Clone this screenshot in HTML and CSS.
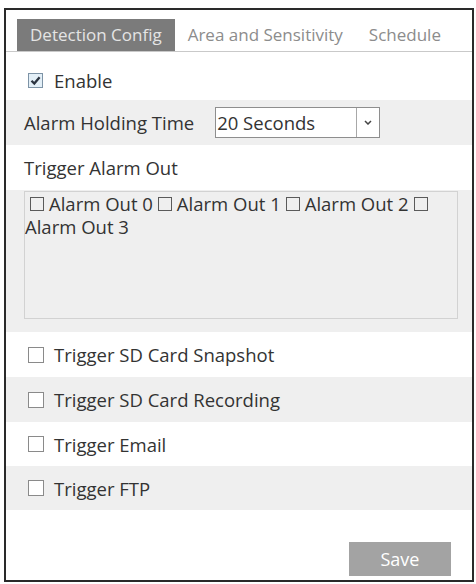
FILE: index.html
```html
<!DOCTYPE html>
<html>
<head>
<meta charset="utf-8">
<link rel="stylesheet" href="styles.css">
</head>
<body>
<div class="panel">
  <div class="tabs">
    <div class="tab active">Detection Config</div>
    <div class="tab">Area and Sensitivity</div>
    <div class="tab">Schedule</div>
  </div>
  <div class="row row-enable">
    <span class="chk checked"><svg viewBox="0 0 13 13" width="13" height="13"><path d="M2.5 6.8 L5.3 9.6 L10.6 3.2" fill="none" stroke="#2b3440" stroke-width="2.3"/></svg></span>
    <span class="text">Enable</span>
  </div>
  <div class="row gray">
    <span class="label label-time">Alarm Holding Time</span>
    <div class="select">
      <span class="select-value">20 Seconds</span>
      <span class="select-arrow"><svg viewBox="0 0 8 5" width="8" height="5"><path d="M1 1 L4 4 L7 1" fill="none" stroke="#444" stroke-width="1.5"/></svg></span>
    </div>
  </div>
  <div class="row">
    <span class="label">Trigger Alarm Out</span>
  </div>
  <div class="outs-wrap">
    <div class="outs"><span class="ocb"></span><wbr>Alarm Out 0<wbr><span class="ocb"></span><wbr>Alarm Out 1<wbr><span class="ocb"></span><wbr>Alarm Out 2<wbr><span class="ocb"></span><wbr>Alarm Out 3</div>
  </div>
  <div class="row check-row">
    <span class="chk"></span><span class="text">Trigger SD Card Snapshot</span>
  </div>
  <div class="row check-row gray">
    <span class="chk"></span><span class="text">Trigger SD Card Recording</span>
  </div>
  <div class="row check-row short">
    <span class="chk"></span><span class="text">Trigger Email</span>
  </div>
  <div class="row check-row gray short">
    <span class="chk"></span><span class="text">Trigger FTP</span>
  </div>
  <div class="footer">
    <button class="save">Save</button>
  </div>
</div>
</body>
</html>
```
FILE: styles.css
```css
html, body {
  margin: 0;
  padding: 0;
  background: #ffffff;
}
body {
  padding: 8px 0 0 4px;
  font-family: "Open Sans", "Noto Sans", sans-serif;
  color: #333333;
}
.panel {
  box-sizing: border-box;
  width: 470px;
  height: 574px;
  border: 2px solid #2a2a2a;
  display: flex;
  flex-direction: column;
  background: #fff;
}
.tabs {
  display: flex;
  padding: 9px 0 0 11px;
  border-bottom: 1px solid #c9c9c9;
  height: 32px;
}
.tab {
  height: 32px;
  line-height: 32px;
  padding: 0 13px;
  font-size: 17px;
  color: #8c8c8c;
  white-space: nowrap;
}
.tab.active {
  background: #7b7b7b;
  color: #e4e4e4;
}
.row {
  display: flex;
  align-items: center;
  height: 45px;
  padding-left: 18px;
  font-size: 18.5px;
  flex-shrink: 0;
}
.row.gray {
  background: #efefef;
}
.row-enable {
  height: 40px;
  padding-top: 8px;
  padding-left: 22px;
}
.check-row {
  padding-left: 22px;
}
.check-row.short {
  height: 44px;
}
.label-time {
  margin-right: 21px;
}
.chk {
  box-sizing: border-box;
  width: 16px;
  height: 16px;
  border: 1px solid #8a8a8a;
  background: #fff;
  margin-right: 10px;
  display: flex;
  align-items: center;
  justify-content: center;
  flex-shrink: 0;
}
.chk.checked {
  width: 15px;
  height: 15px;
  border-color: #7d93a6;
  background: #e3eff7;
  margin-right: 11px;
}
.select {
  box-sizing: border-box;
  width: 165px;
  height: 31px;
  border: 1px solid #8e8e8e;
  background: #fff;
  display: flex;
  align-items: stretch;
}
.select-value {
  flex: 1;
  display: flex;
  align-items: center;
  padding-left: 1px;
  font-size: 18.5px;
  color: #333;
}
.select-arrow {
  width: 22px;
  border-left: 1px solid #a8a8a8;
  display: flex;
  align-items: center;
  justify-content: center;
}
.outs-wrap {
  background: #efefef;
  padding: 1px 14px 13px 18px;
  height: 128px;
  flex-shrink: 0;
}
.outs {
  box-sizing: border-box;
  height: 128px;
  border: 1px solid #d2d2d2;
  font-size: 18.5px;
  line-height: 23px;
  color: #333333;
}
.ocb {
  display: inline-block;
  box-sizing: border-box;
  width: 14px;
  height: 14px;
  border: 1px solid #5a5a5a;
  margin: 0 5px 0 5px;
}
.footer {
  flex: 1;
  display: flex;
  justify-content: flex-end;
  align-items: flex-end;
  padding: 0 21px 4px 0;
}
.save {
  width: 102px;
  height: 34px;
  border: none;
  background: #a3a3a3;
  color: #ffffff;
  font-family: "Open Sans", "Noto Sans", sans-serif;
  font-size: 18px;
  padding: 0;
}
```
